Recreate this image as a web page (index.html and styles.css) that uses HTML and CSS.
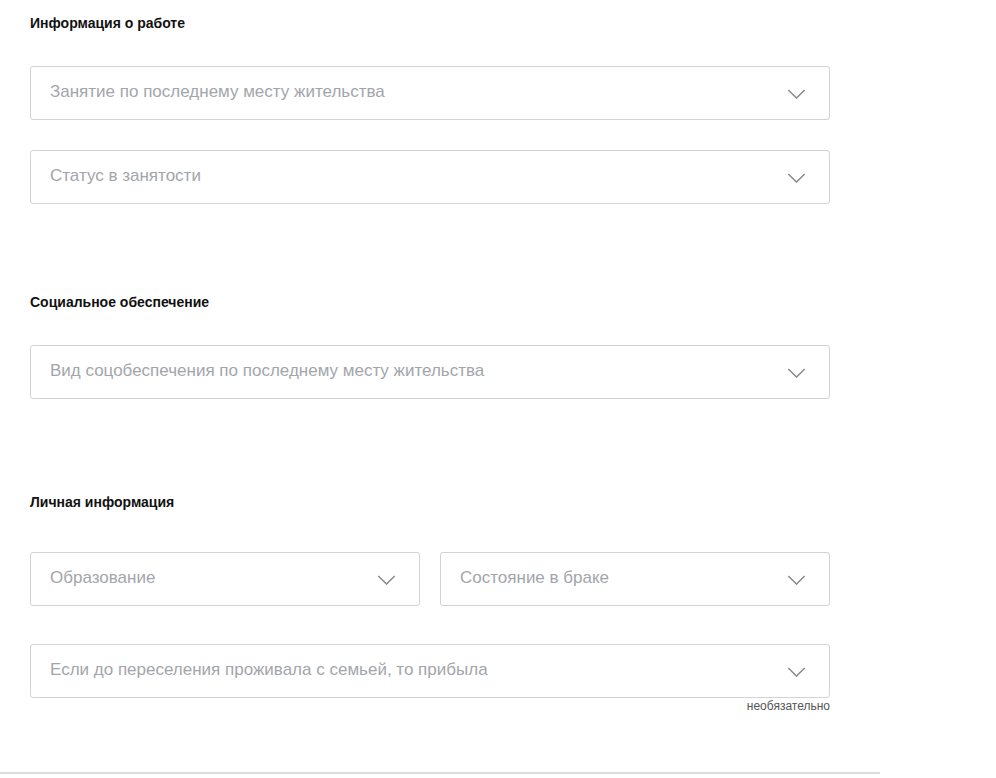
FILE: index.html
```html
<!DOCTYPE html>
<html lang="ru">
<head>
<meta charset="utf-8">
<link rel="stylesheet" href="styles.css">
</head>
<body>
<div class="page">
  <section class="section s1">
    <h3 class="title">Информация о работе</h3>
    <div class="field"><span class="ph">Занятие по последнему месту жительства</span><svg class="chev" viewBox="0 0 20 11"><path d="M1 1l9 9 9-9"/></svg></div>
    <div class="field gap30"><span class="ph">Статус в занятости</span><svg class="chev" viewBox="0 0 20 11"><path d="M1 1l9 9 9-9"/></svg></div>
  </section>
  <section class="section s2">
    <h3 class="title">Социальное обеспечение</h3>
    <div class="field"><span class="ph">Вид соцобеспечения по последнему месту жительства</span><svg class="chev" viewBox="0 0 20 11"><path d="M1 1l9 9 9-9"/></svg></div>
  </section>
  <section class="section s3">
    <h3 class="title">Личная информация</h3>
    <div class="row">
      <div class="field"><span class="ph">Образование</span><svg class="chev" viewBox="0 0 20 11"><path d="M1 1l9 9 9-9"/></svg></div>
      <div class="field"><span class="ph">Состояние в браке</span><svg class="chev" viewBox="0 0 20 11"><path d="M1 1l9 9 9-9"/></svg></div>
    </div>
    <div class="field gap38"><span class="ph">Если до переселения проживала с семьей, то прибыла</span><svg class="chev" viewBox="0 0 20 11"><path d="M1 1l9 9 9-9"/></svg></div>
    <div class="hint">необязательно</div>
  </section>
  <div class="divider"></div>
</div>
</body>
</html>
```
FILE: styles.css
```css
* { box-sizing: border-box; }
html, body { margin: 0; padding: 0; background: #fff; }
body { font-family: "Liberation Sans", Arial, sans-serif; color: #000; }
.page { width: 880px; padding-top: 15px; }
.section { padding-left: 30px; width: 830px; }
.title { margin: 0; font-size: 14px; line-height: 16px; font-weight: bold; color: #111; }
.s1 .title { margin-bottom: 35px; }
.s2 { margin-top: 90px; }
.s2 .title { margin-bottom: 35px; }
.s3 { margin-top: 95px; }
.s3 .title { margin-bottom: 42px; }
.field {
  height: 54px;
  border: 1px solid #d3d3d3;
  border-radius: 3px;
  display: flex;
  align-items: center;
  justify-content: space-between;
  padding: 0 23px 0 19px;
  background: #fff;
}
.ph { font-size: 17px; color: #a2a6ab; margin-top: -3px; }
.chev { width: 19px; height: 10px; fill: none; stroke: #8a8a8a; stroke-width: 1.6; margin-top: 2px; }
.gap30 { margin-top: 30px; }
.gap38 { margin-top: 38px; }
.row { display: grid; grid-template-columns: 1fr 1fr; gap: 20px; }
.hint { text-align: right; font-size: 12px; color: #555; margin-top: 1px; line-height: 14px; }
.divider { height: 2px; background: #dcdcdc; margin-top: 59px; width: 880px; }
```
